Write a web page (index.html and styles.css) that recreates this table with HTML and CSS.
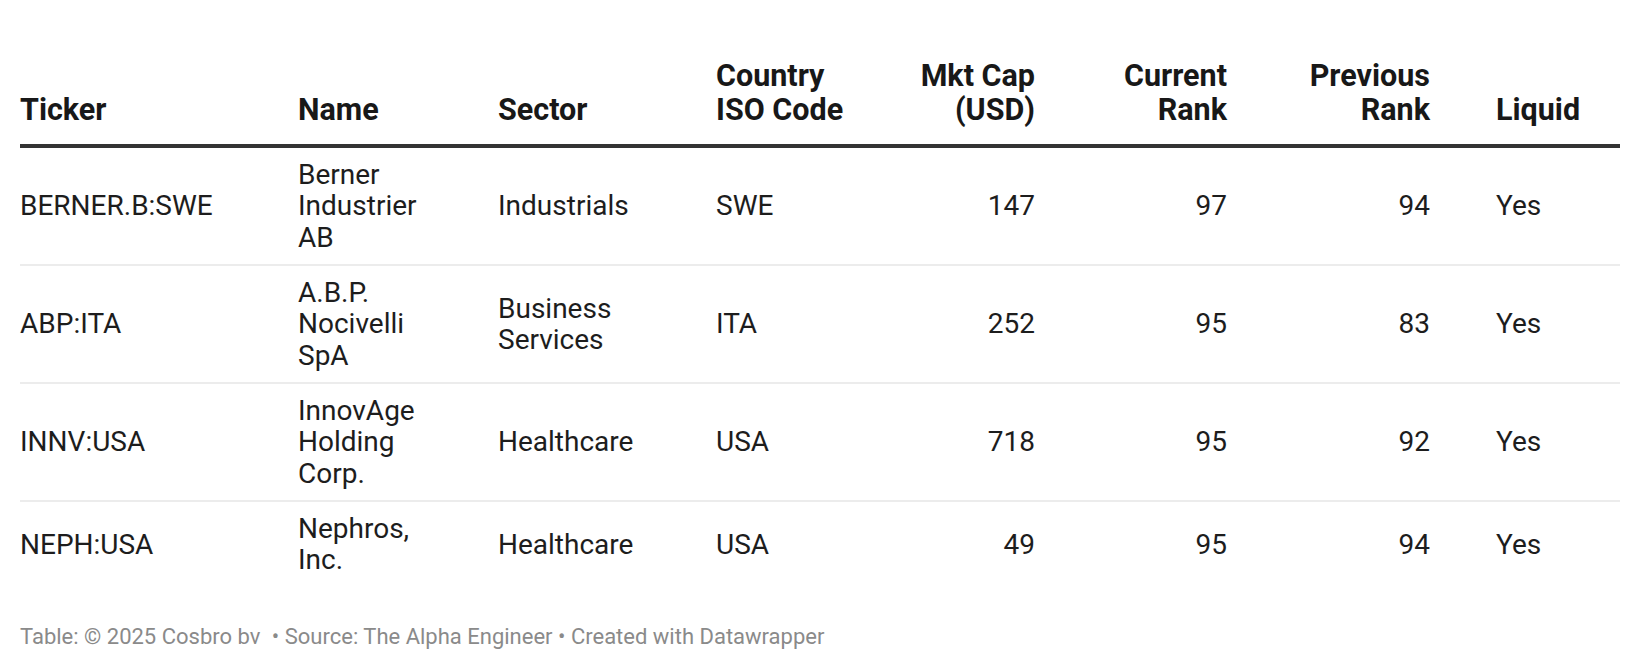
FILE: index.html
```html
<!DOCTYPE html>
<html lang="en">
<head>
<meta charset="utf-8">
<title>Table</title>
<link rel="stylesheet" href="styles.css">
</head>
<body>
<div class="wrap">
  <table class="dw">
    <colgroup>
      <col class="c-ticker">
      <col class="c-name">
      <col class="c-sector">
      <col class="c-country">
      <col class="c-cap">
      <col class="c-cur">
      <col class="c-prev">
      <col class="c-liq">
    </colgroup>
    <thead>
      <tr>
        <th class="name-col">Ticker</th>
        <th class="name-col">Name</th>
        <th class="name-col">Sector</th>
        <th class="name-col">Country<br>ISO Code</th>
        <th class="num">Mkt Cap<br>(USD)</th>
        <th class="num">Current<br>Rank</th>
        <th class="num">Previous<br>Rank</th>
        <th class="liq">Liquid</th>
      </tr>
    </thead>
    <tbody>
      <tr>
        <td>BERNER.B:SWE</td>
        <td class="wrapname">Berner Industrier AB</td>
        <td class="wrapsector">Industrials</td>
        <td>SWE</td>
        <td class="num">147</td>
        <td class="num">97</td>
        <td class="num">94</td>
        <td class="liq">Yes</td>
      </tr>
      <tr>
        <td>ABP:ITA</td>
        <td class="wrapname">A.B.P. Nocivelli SpA</td>
        <td class="wrapsector">Business Services</td>
        <td>ITA</td>
        <td class="num">252</td>
        <td class="num">95</td>
        <td class="num">83</td>
        <td class="liq">Yes</td>
      </tr>
      <tr>
        <td>INNV:USA</td>
        <td class="wrapname">InnovAge Holding Corp.</td>
        <td class="wrapsector">Healthcare</td>
        <td>USA</td>
        <td class="num">718</td>
        <td class="num">95</td>
        <td class="num">92</td>
        <td class="liq">Yes</td>
      </tr>
      <tr>
        <td>NEPH:USA</td>
        <td class="wrapname">Nephros, Inc.</td>
        <td class="wrapsector">Healthcare</td>
        <td>USA</td>
        <td class="num">49</td>
        <td class="num">95</td>
        <td class="num">94</td>
        <td class="liq">Yes</td>
      </tr>
    </tbody>
  </table>
  <p class="footer">Table: © 2025 Cosbro bv <span class="sep">•</span> Source: The Alpha Engineer <span class="sep2">•</span> Created with Datawrapper</p>
</div>
</body>
</html>
```

FILE: styles.css
```css
html, body {
  margin: 0;
  padding: 0;
  background: #ffffff;
}

body {
  font-family: Roboto, "Liberation Sans", Arial, sans-serif;
  color: #1d1d1d;
}

.wrap {
  padding: 51px 20px 0 20px;
}

.dw {
  width: 1600px;
  border-collapse: collapse;
  table-layout: fixed;
}

.c-ticker { width: 278px; }
.c-name { width: 200px; }
.c-sector { width: 218px; }
.c-country { width: 162px; }
.c-cap { width: 157px; }
.c-cur { width: 192px; }
.c-prev { width: 203px; }
.c-liq { width: 190px; }

.dw th {
  font-weight: 700;
  font-size: 30.5px;
  line-height: 34px;
  color: #181818;
  text-align: left;
  vertical-align: bottom;
  padding: 8px 0 17px 0;
  border-bottom: 4px solid #333333;
}

.dw td {
  font-size: 28px;
  line-height: 31.33px;
  color: #1d1d1d;
  text-align: left;
  vertical-align: middle;
  padding: 11px 0;
  border-bottom: 2px solid #ececec;
}

.dw tbody tr:last-child td {
  border-bottom: none;
}

.dw .num {
  text-align: right;
}

.dw .liq {
  padding-left: 66px;
}

.dw td.wrapname {
  padding-right: 70px;
}

.dw td.wrapsector {
  padding-right: 68px;
}

.footer {
  margin: 37px 0 0 0;
  font-size: 22px;
  line-height: 26px;
  color: #8a8a8a;
}

.footer .sep {
  margin-left: 6px;
}
```
